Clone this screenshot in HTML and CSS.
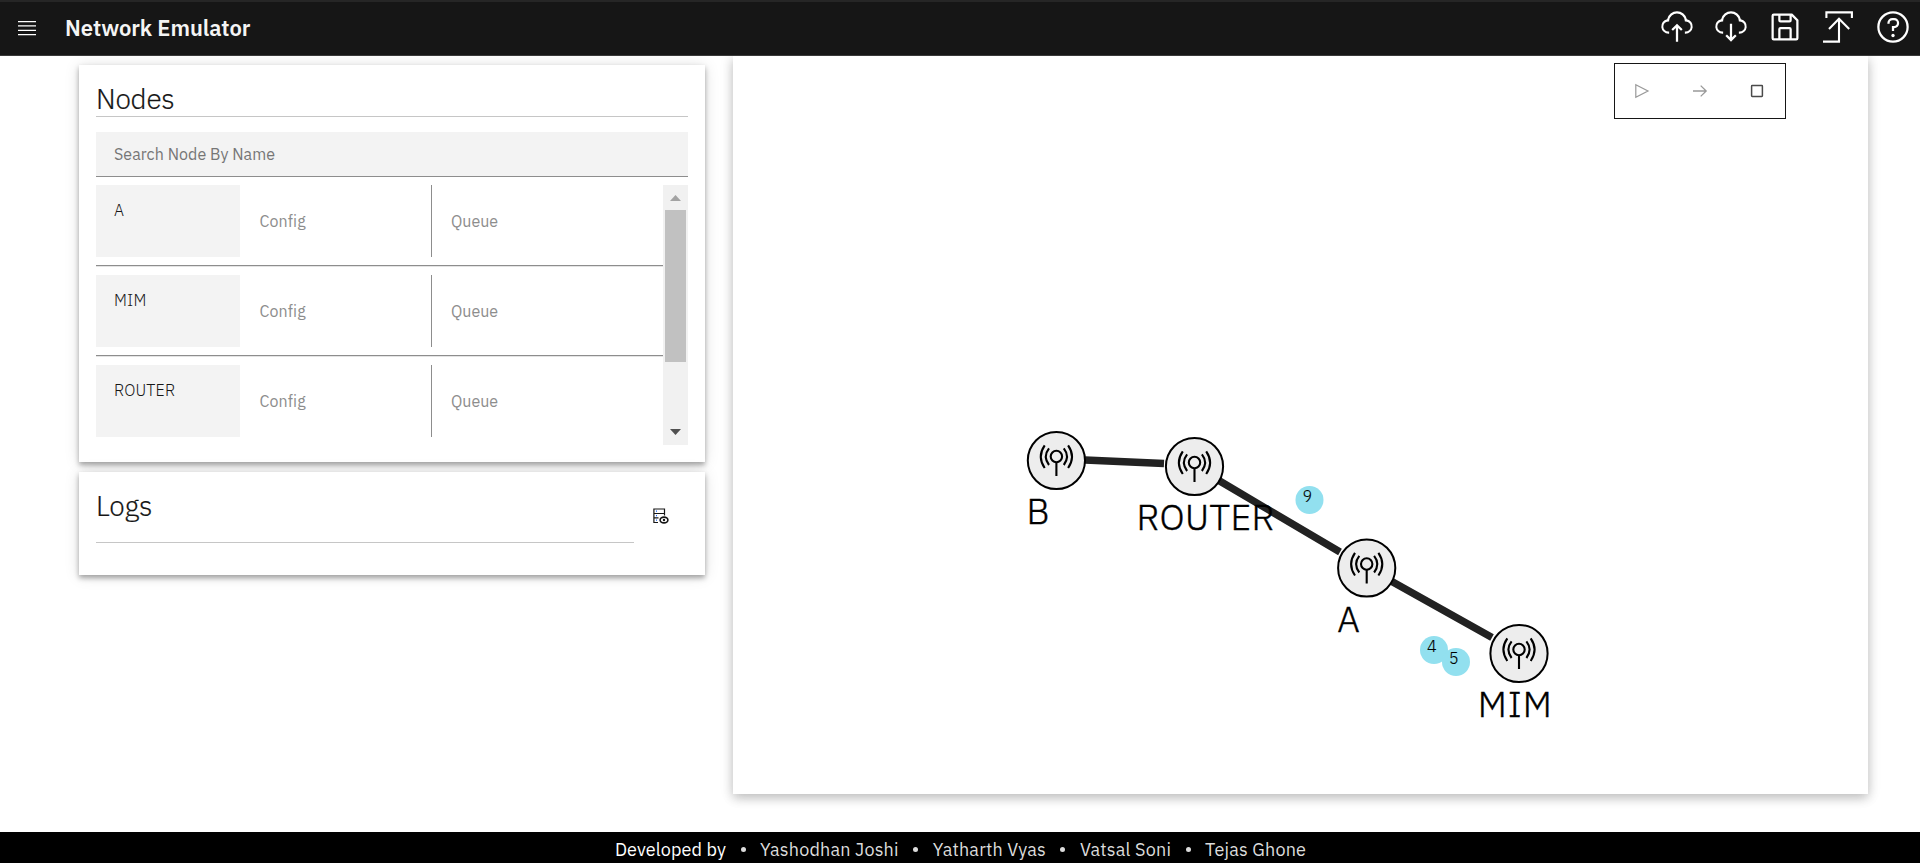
FILE: index.html
```html
<!DOCTYPE html>
<html lang="en">
<head>
<meta charset="utf-8">
<title>Network Emulator</title>
<link rel="stylesheet" href="styles.css">
</head>
<body>
<header class="header">
  <svg class="menu-icon" width="18" height="16" viewBox="0 0 18 16"><path d="M0 1.6H18M0 5.9H18M0 10.3H18M0 14.6H18" stroke="#fff" stroke-width="1.2"/></svg>
  <h1 class="title">Network Emulator</h1>
  <nav class="actions">
    <svg class="action" viewBox="0 0 32 32"><path d="M11 18L12.41 19.41 15 16.83 15 29 17 29 17 16.83 19.59 19.41 21 18 16 13 11 18z"/><path d="M23.5,22H23V20h.5a4.5,4.5,0,0,0,.36-9L23,11l-.1-.82a7,7,0,0,0-13.88,0L9,11,8.14,11a4.5,4.5,0,0,0,.36,9H9v2H8.5A6.5,6.5,0,0,1,7.2,9.14a9,9,0,0,1,17.6,0A6.5,6.5,0,0,1,23.5,22Z"/></svg>
    <svg class="action" viewBox="0 0 32 32"><path d="M11 24L12.41 22.59 15 25.17 15 13 17 13 17 25.17 19.59 22.59 21 24 16 29 11 24z"/><path d="M23.5,22H23V20h.5a4.5,4.5,0,0,0,.36-9L23,11l-.1-.82a7,7,0,0,0-13.88,0L9,11,8.14,11a4.5,4.5,0,0,0,.36,9H9v2H8.5A6.5,6.5,0,0,1,7.2,9.14a9,9,0,0,1,17.6,0A6.5,6.5,0,0,1,23.5,22Z"/></svg>
    <svg class="action" viewBox="0 0 32 32"><path d="M27.71,9.29l-5-5A1,1,0,0,0,22,4H6A2,2,0,0,0,4,6V26a2,2,0,0,0,2,2H26a2,2,0,0,0,2-2V10A1,1,0,0,0,27.71,9.29ZM12,6h8v4H12Zm8,20H12V18h8Zm2,0V18a2,2,0,0,0-2-2H12a2,2,0,0,0-2,2v8H6V6h4v4a2,2,0,0,0,2,2h8a2,2,0,0,0,2-2V6.41l4,4V26Z"/></svg>
    <svg class="action" viewBox="0 0 36 36"><path class="action-line" d="M5.4 9V3.4H30.9V9M8 20L18 9.8 28.2 20M18 9.8V32.6H2"/></svg>
    <svg class="action" viewBox="0 0 32 32"><path d="M16,2A14,14,0,1,0,30,16,14,14,0,0,0,16,2Zm0,26A12,12,0,1,1,28,16,12,12,0,0,1,16,28Z"/><circle cx="16" cy="23.5" r="1.5"/><path d="M17,8H15.5A4.49,4.49,0,0,0,11,12.5V13h2v-.5A2.5,2.5,0,0,1,15.5,10H17a2.5,2.5,0,0,1,0,5H15v4.5h2V17a4.5,4.5,0,0,0,0-9Z"/></svg>
  </nav>
</header>

<main class="main">
  <div class="side">
    <section class="card nodes-card">
      <h2 class="heading">Nodes</h2>
      <div class="search"><span class="search-text">Search Node By Name</span></div>
      <div class="list">
        <div class="rows">
          <div class="row"><div class="name">A</div><div class="cell config">Config</div><div class="cell">Queue</div></div>
          <div class="row"><div class="name">MIM</div><div class="cell config">Config</div><div class="cell">Queue</div></div>
          <div class="row"><div class="name">ROUTER</div><div class="cell config">Config</div><div class="cell">Queue</div></div>
        </div>
        <div class="scrollbar">
          <svg width="11" height="6" viewBox="0 0 11 6"><path d="M5.5 0L11 6H0z" fill="#a3a3a3"/></svg>
          <div class="thumb"></div>
          <svg class="arrow-down" width="11" height="6" viewBox="0 0 11 6"><path d="M5.5 6L11 0H0z" fill="#505050"/></svg>
        </div>
      </div>
    </section>
    <section class="card logs-card">
      <h2 class="heading logs-heading">Logs</h2>
      <svg class="log-icon" width="16" height="16" viewBox="0 0 16 16" fill="none" stroke="#161616" stroke-width="1.2"><path d="M5 14.5H.9V1H11.5V7.5M.9 5.5H11.5M.9 9.9H5.5"/><ellipse cx="11" cy="12" rx="3.9" ry="2.9" stroke-width="1.6"/><circle cx="11" cy="12" r="1.2" fill="#161616" stroke="none"/><path d="M3 3.2h1M3 7.7h1M3 12.1h1" stroke="#0f62fe"/></svg>
    </section>
  </div>

  <section class="canvas">
    <svg class="graph" width="1135" height="738" viewBox="733 56 1135 738">
      <defs>
        <g id="station">
          <circle r="28.6" fill="#ededed" stroke="#000" stroke-width="2"/>
          <g fill="none" stroke="#000" stroke-width="2.1"><circle cy="-4" r="5.7"/><path d="M0 1.7V15.5M-7.4 -12.1Q-13.8 -4 -7.4 4.5M7.4 -12.1Q13.8 -4 7.4 4.5M-11.7 -15.2Q-19.5 -4 -11.7 7.5M11.7 -15.2Q19.5 -4 11.7 7.5"/></g>
        </g>
      </defs>
      <g stroke="#222" stroke-width="7.3"><path d="M1085 460L1164 463.5M1218 480L1340 552M1391 581L1492 637.5"/></g>
      <use href="#station" x="1056.4" y="460.5"/>
      <use href="#station" x="1194.5" y="466.5"/>
      <use href="#station" x="1366.7" y="568"/>
      <use href="#station" x="1519" y="653.5"/>
      <g class="label">
        <text x="1026.5" y="524">B</text>
        <text x="1136.5" y="530" textLength="138">ROUTER</text>
        <text x="1337.2" y="632">A</text>
        <text x="1477.7" y="717" textLength="74">MIM</text>
      </g>
      <g fill="#92e0ef"><circle cx="1309.5" cy="500" r="14"/><circle cx="1434" cy="650" r="14"/><circle cx="1456" cy="662" r="14"/></g>
      <g class="packet"><text x="1302.5" y="502">9</text><text x="1427" y="652">4</text><text x="1449" y="664">5</text></g>
    </svg>
    <div class="toolbar">
      <svg width="16" height="16" viewBox="0 0 16 16" fill="none" stroke="#999"><path d="M1.8 1.7L14 8 1.8 14.3z" stroke-width="1.2"/></svg>
      <svg width="16" height="16" viewBox="0 0 16 16" fill="none" stroke="#999"><path d="M1 8H14M8.7 2.6L14.2 8 8.7 13.4" stroke-width="1.3"/></svg>
      <svg width="16" height="16" viewBox="0 0 16 16" fill="none" stroke="#4a4a4a"><rect x="2.6" y="2.6" width="10.8" height="10.8" rx=".6" stroke-width="1.5"/></svg>
    </div>
  </section>
</main>

<footer class="footer">
  <span class="lead">Developed by</span><i class="dot"></i><span>Yashodhan Joshi</span><i class="dot"></i><span>Yatharth Vyas</span><i class="dot"></i><span>Vatsal Soni</span><i class="dot"></i><span>Tejas Ghone</span>
</footer>
</body>
</html>
```
FILE: styles.css
```css
* { box-sizing: border-box; }
body {
  margin: 0;
  height: 863px;
  display: flex;
  flex-direction: column;
  overflow: hidden;
  background: #fff;
  color: #161616;
  font-family: "IBM Plex Sans", Roboto, sans-serif;
}
.header {
  position: relative;
  z-index: 2;
  flex: none;
  height: 56px;
  display: flex;
  align-items: center;
  padding: 0 9px 3px 18px;
  background: #161616;
  border-top: 2px solid #262626;
  border-bottom: 1px solid #393939;
}
.menu-icon { margin-top: 2px; }
.title {
  margin: 1px 0 0 29px;
  font-size: 22px;
  line-height: 28px;
  font-weight: 600;
  letter-spacing: -.06px;
  color: #f4f4f4;
}
.actions { display: flex; gap: 18px; margin-left: auto; }
.action { width: 36px; height: 36px; fill: #fff; }
.action-line { fill: none; stroke: #fff; stroke-width: 2.1; }

.main { flex: 1; display: flex; align-items: flex-start; padding-left: 79px; }
.side { width: 626px; margin-top: 9px; display: flex; flex-direction: column; gap: 10px; }
.card {
  background: #fff;
  padding: 17px;
  box-shadow: 0 3px 5px rgba(0, 0, 0, .32), 0 1px 14px rgba(0, 0, 0, .13);
}
.nodes-card { height: 397px; }
.heading {
  margin: 0;
  height: 35px;
  font-size: 28px;
  line-height: 34px;
  font-weight: 300;
  letter-spacing: -.25px;
  -webkit-text-stroke: .2px #161616;
  border-bottom: 1px solid #c6c6c6;
}
.search {
  margin-top: 15px;
  height: 45px;
  padding-left: 18px;
  background: #f3f3f3;
  border-bottom: 1px solid #8d8d8d;
  font-size: 16px;
  line-height: 45px;
  color: #767676;
}
.search-text { letter-spacing: .05px; }
.list { margin-top: 8px; height: 260px; display: flex; overflow: hidden; }
.rows { flex: 1; overflow: hidden; }
.row { height: 90px; display: flex; position: relative; padding-bottom: 18px; }
.row:not(:last-child)::after {
  content: "";
  position: absolute;
  left: 0; right: 0; top: 80px;
  height: 1px;
  background: #8d8d8d;
  box-shadow: 0 1px #e4e4e4;
}
.name {
  width: 144px;
  padding: 15px 18px;
  background: #f3f3f3;
  font-size: 16px;
  line-height: 21px;
  font-weight: 300;
  letter-spacing: .16px;
}
.cell { font-size: 16px; line-height: 73px; color: #8d8d8d; padding-left: 19px; }
.config { width: 192px; padding-left: 19.5px; border-right: 1px solid #8d8d8d; letter-spacing: .1px; }
.scrollbar {
  width: 25px;
  padding: 10px 2px;
  background: #f1f1f1;
  display: flex;
  flex-direction: column;
  align-items: center;
}
.thumb { width: 21px; height: 152px; margin-top: 9px; background: #c1c1c1; }
.arrow-down { margin-top: auto; }

.logs-card { height: 103px; display: flex; align-items: flex-start; }
.logs-heading { width: 538px; height: 54px; }
.log-icon { margin: 19px 0 0 19px; }

.canvas {
  position: relative;
  width: 1135px;
  height: 738px;
  margin-left: 28px;
  background: #fff;
  box-shadow: 0 4px 10px rgba(0, 0, 0, .2), 0 2px 14px rgba(0, 0, 0, .1);
}
.graph { display: block; }
.label { font-size: 36px; font-weight: 300; fill: #000; stroke: #000; stroke-width: .4px; }
.packet { font-size: 16px; font-weight: 300; fill: #000; stroke: #000; stroke-width: .15px; }
.toolbar {
  position: absolute;
  left: 881px;
  top: 7px;
  width: 172px;
  height: 56px;
  padding: 0 20px 0 19px;
  display: flex;
  align-items: center;
  justify-content: space-between;
  border: 1px solid #161616;
}

.footer {
  flex: none;
  height: 31px;
  display: flex;
  align-items: center;
  justify-content: center;
  background: #000;
  color: #dcdcdc;
  font-size: 18px;
  line-height: 31px;
  padding: 4px 0 0 1px;
  letter-spacing: .18px;
}
.lead { color: #fff; letter-spacing: .12px; }
.dot { width: 5px; height: 5px; margin: 0 14.5px; border-radius: 50%; background: #dcdcdc; }
```
